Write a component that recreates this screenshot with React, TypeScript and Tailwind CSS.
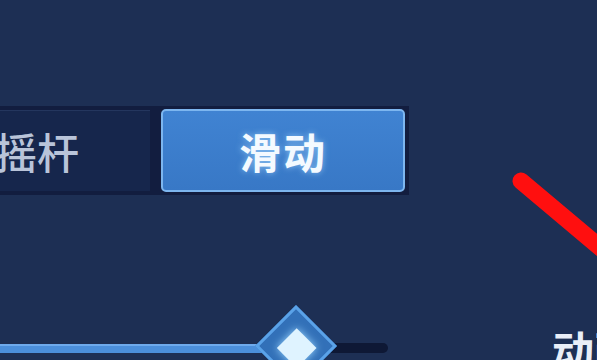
import React from "react";

export default function App() {
  const cjk = { fontFamily: '"Noto Sans CJK SC", "Noto Sans", sans-serif' };
  return (
    <div className="relative w-[597px] h-[360px] overflow-hidden bg-[#1d2f54] flex flex-col" style={cjk}>
      {/* toggle */}
      <div className="mt-[106px] flex w-[409px] h-[89px] bg-[#121d3f] pr-[4px] pt-[3px] pb-[3px] items-stretch">
        <div className="w-[150px] my-[1px] bg-[#16264c] border-t border-[#24365e] flex items-center overflow-hidden">
          <span className="ml-[-5px] text-[42px] leading-none font-medium text-[#b9c4d9] whitespace-nowrap">摇杆</span>
        </div>
        <div className="w-[11px]" />
        <div className="flex-1 rounded-[5px] border-2 border-[#7db6ef] bg-gradient-to-b from-[#4083d2] to-[#3878c6] flex items-center justify-center">
          <span className="text-[42px] leading-none font-bold tracking-[2px] text-[#f4faff] whitespace-nowrap [text-shadow:0_0_6px_rgba(170,220,255,0.7)]">滑动</span>
        </div>
      </div>

      {/* bottom row: slider + label */}
      <div className="mt-[110px] flex items-start h-[55px]">
        <div className="w-[552px] shrink-0 pt-[38px]">
          <div className="relative flex items-center w-[388px] h-[10px]">
            <div className="w-[296px] h-[9px] bg-[#4b8fdb] border-t-2 border-[#6eaaec]" />
            <div className="flex-1 h-[10px] bg-[#0e1835] rounded-r-full" />
            <div className="absolute left-[267px] top-[-26px] w-[58px] h-[58px] rotate-45 bg-[#3270b8] border-[3px] border-[#5aa2e8] flex items-center justify-center">
              <div className="w-[28px] h-[28px] translate-x-[2px] translate-y-[1px] bg-[#dff3ff] shadow-[0_0_8px_#9bd6ff]" />
            </div>
          </div>
        </div>
        <div className="shrink-0 pt-[23px] whitespace-nowrap text-[42px] leading-none font-bold text-[#e9eef7]">动画</div>
      </div>

      {/* red annotation stroke */}
      <svg className="absolute left-0 top-0 pointer-events-none" width="597" height="360" viewBox="0 0 597 360">
        <line x1="521" y1="181" x2="660" y2="298" stroke="#ff0f0f" strokeWidth="17" strokeLinecap="round" />
      </svg>
    </div>
  );
}
